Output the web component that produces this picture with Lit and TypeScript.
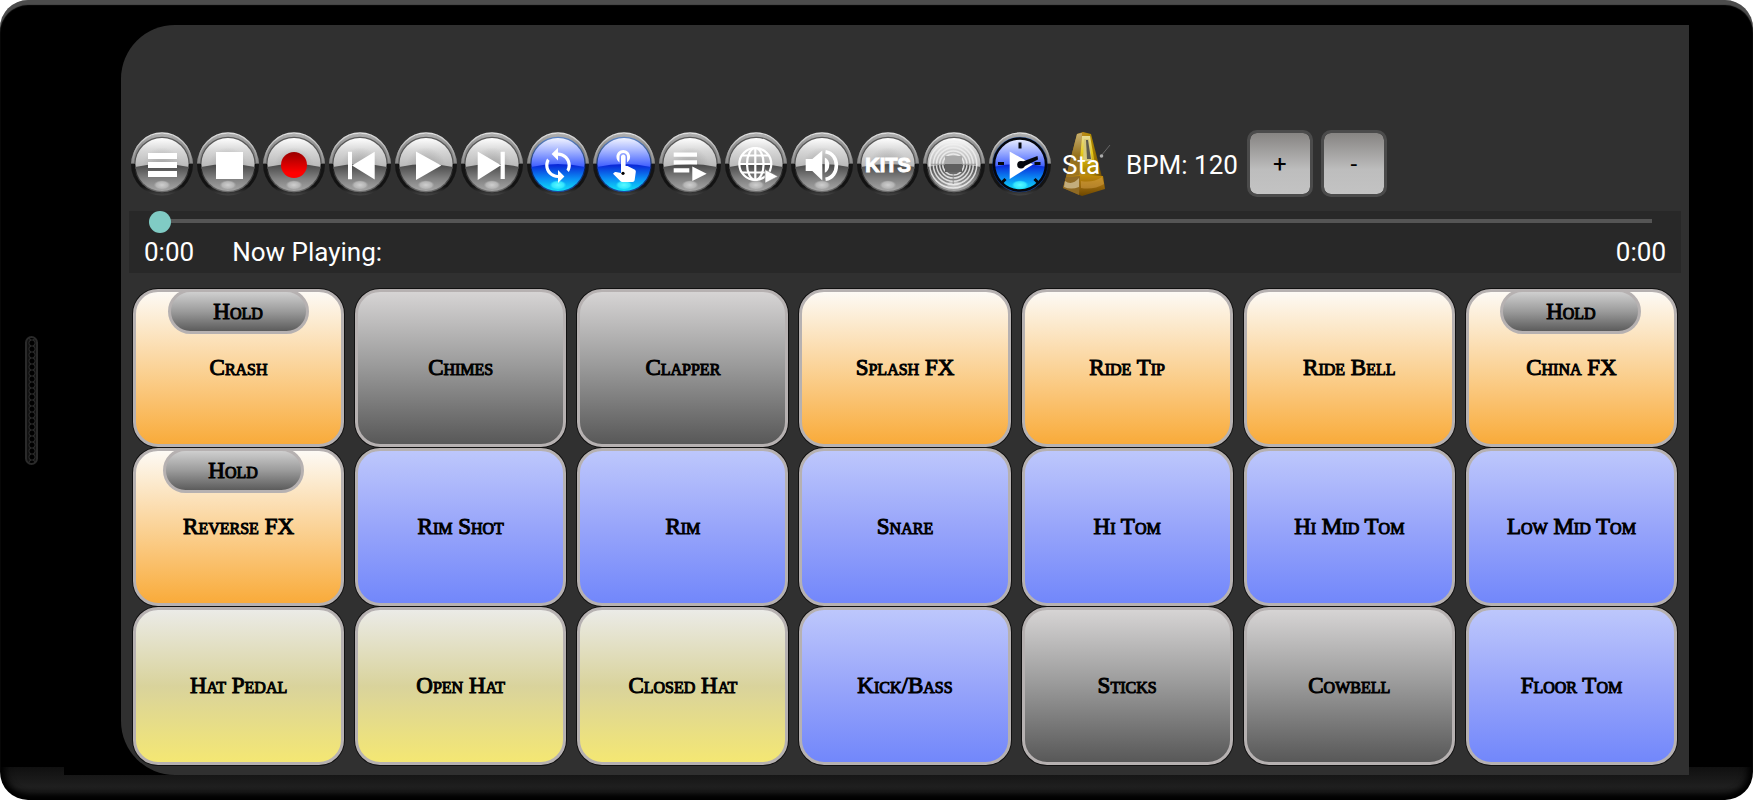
import { LitElement, html, svg, css, nothing } from "lit";
import { customElement, property, state } from "lit/decorators.js";
import { classMap } from "lit/directives/class-map.js";

const GLYPHS: Record<string, unknown> = {
  menu: svg`<path d="M17 20h29v6H17zM17 29h29v6H17zM17 38h29v6H17z"/>`,
  stop: svg`<path d="M19 19h27v27H19z"/>`,
  record: svg`<circle cx="31" cy="32" r="13" fill="url(#rec)"/>`,
  previous: svg`<path d="M19 18.7h4v27.6h-4zM45.7 18.7v27.8L23 32.5z"/>`,
  play: svg`<path d="M21 18.5L46.3 32.5 21 47z"/>`,
  next: svg`<path d="M16.7 18.5L40 32.3 16.7 47zM39.6 18.7h4.2v27.3h-4.2z"/>`,
  loop: svg`<path transform="translate(11.8 13.1) scale(1.6)" d="M12 4V1L8 5l4 4V6c3.31 0 6 2.69 6 6 0 1.01-.25 1.97-.7 2.8l1.46 1.46C19.54 15.03 20 13.57 20 12c0-4.42-3.58-8-8-8zm0 14c-3.31 0-6-2.69-6-6 0-1.01.25-1.97.7-2.8L5.24 7.74C4.46 8.97 4 10.43 4 12c0 4.42 3.58 8 8 8v3l4-4-4-4v3z"/>`,
  touch: svg`<path transform="translate(12.8 12.4) scale(1.52)" d="M9 11.24V7.5C9 6.12 10.12 5 11.5 5S14 6.12 14 7.5v3.74c1.21-.81 2-2.18 2-3.74C16 5.01 13.99 3 11.5 3S7 5.01 7 7.5c0 1.56.79 2.93 2 3.74zm9.84 4.63l-4.54-2.26c-.17-.07-.35-.11-.54-.11H13v-6c0-.83-.67-1.5-1.5-1.5S10 6.67 10 7.5v10.74l-3.43-.72c-.08-.01-.15-.03-.24-.03-.31 0-.59.13-.79.33l-.79.8 4.94 4.94c.27.27.65.44 1.06.44h6.79c.75 0 1.33-.55 1.44-1.28l.75-5.27c.01-.07.02-.14.02-.2 0-.62-.38-1.16-.91-1.38z"/><circle cx="30" cy="40.3" r="1.6" fill="#000"/>`,
  playlist: svg`<path d="M14.7 19.5H38v4.2H14.7zM14.7 27.2H38v4.2H14.7zM14.7 35.2h15.6v4.2H14.7zM33.3 33.5l14.4 7.2-14.4 7.2z"/>`,
  globe: svg`<g fill="none" stroke="#fff" stroke-width="2.2">
      <circle cx="30.3" cy="31" r="16"/><ellipse cx="30.3" cy="31" rx="8.3" ry="16"/>
      <path d="M30.3 15v32M14.3 31h32M17 22.5h26.6M17 39.5h26.6"/></g>
      <path d="M40 36.6l13 6.8-13 6.8z" stroke="#777" stroke-width=".6"/>`,
  volume: svg`<path d="M14.7 26h6.6l10-8.6v30l-10-9.5h-6.6z"/><path d="M33.8 24.5c6 2.6 6 12.6 0 15.2z"/>
      <path d="M34.5 18.7c14.5 2 14.5 25.5 0 27.5" fill="none" stroke="#fff" stroke-width="3.6"/>`,
  kits: svg`<text class="kits" x="31" y="38.5" text-anchor="middle">KITS</text>`,
  rings: svg`<g fill="none" stroke="#f0f0f0" stroke-width="1.5" opacity=".85">
      <circle cx="30.3" cy="31.5" r="23.5"/><circle cx="30.3" cy="31.5" r="20"/><circle cx="30.3" cy="31.5" r="16.8"/>
      <circle cx="30.3" cy="31.5" r="13.6"/><circle cx="30.3" cy="31.5" r="10.6"/></g>
      <path d="M22 23h17v8H22z" fill="#a9a9a9"/><path d="M22 31h17v8H22z" fill="#606060"/>
      <path d="M30.3 41v10M8 31.5h14M39 31.5h14" stroke="#888" stroke-width="1.5" opacity=".6"/>`,
  timer: svg`<circle cx="31" cy="31.5" r="26" fill="none" stroke="#05070d" stroke-width="2.5"/>
      <path d="M31 9.5v6M9 30.5h6M45.5 30.5h6M12.5 50l4-4M49.5 50l-4-4" stroke="#05070d" stroke-width="3" fill="none"/>
      <path d="M20.7 18.5L44 31.5 20.7 46z"/>
      <path d="M31 29.5L48.5 23 49 26.5 34 34z" fill="#05070d"/><circle cx="32" cy="31.8" r="3.8" fill="#05070d"/>`,
};

@customElement("orb-button")
export class OrbButton extends LitElement {
  @property() glyph = "menu";
  @property() label = "";
  @property({ type: Boolean }) active = false;

  static styles = css`
    :host { display: block; }
    .orb {
      display: block;
      width: 62px;
      height: 64px;
      padding: 0;
      border: 0;
      background: none;
      cursor: pointer;
    }
    .art { display: block; width: 62px; height: 64px; }
    .kits {
      font: bold 20px "Liberation Sans", Arial, sans-serif;
      stroke: #fff;
      stroke-width: 1px;
    }
  `;

  render() {
    const on = this.active;
    return html`<button class="orb" aria-label=${this.label} aria-pressed=${on ? "true" : "false"}>
      <svg class="art" viewBox="0 -1 62 64" aria-hidden="true">
        <defs>
          <linearGradient id="rim" x1="0" y1="0" x2="0" y2="1">
            <stop offset="0" stop-color="#b0b0b0"/><stop offset=".25" stop-color="#888"/>
            <stop offset=".48" stop-color="#8c8c8c"/><stop offset=".49" stop-color="#161616"/>
            <stop offset=".85" stop-color="#121212"/><stop offset="1" stop-color="#444"/>
          </linearGradient>
          <linearGradient id="edge" x1="0" y1="0" x2="0" y2="1">
            <stop offset="0" stop-color="#e0e0e0"/><stop offset="1" stop-color="#8e8e8e"/>
          </linearGradient>
          <linearGradient id="lip" x1="0" y1="0" x2="0" y2="1">
            <stop offset="0" stop-color=${on ? "#5d86c8" : "#5a5a5a"}/><stop offset=".49" stop-color=${on ? "#1b3566" : "#505050"}/>
            <stop offset=".5" stop-color=${on ? "#041440" : "#0a0a0a"}/><stop offset="1" stop-color=${on ? "#1c4aa0" : "#707070"}/>
          </linearGradient>
          <linearGradient id="upper" x1="0" y1="0" x2="0" y2="1">
            <stop offset=".15" stop-color=${on ? "#eef1ff" : "#fdfdfd"}/>
            <stop offset=".5" stop-color=${on ? "#a3b3ff" : "#d6d6d6"}/>
            <stop offset=".95" stop-color=${on ? "#3c5cff" : "#b8b8b8"}/>
          </linearGradient>
          <radialGradient id="shade" cx=".5" cy=".55" r=".38">
            <stop offset="0" stop-color="#888" stop-opacity=${on ? "0" : ".55"}/>
            <stop offset="1" stop-color="#888" stop-opacity="0"/>
          </radialGradient>
          <linearGradient id="lower" x1="0" y1="0" x2="0" y2="1">
            <stop offset=".05" stop-color=${on ? "#0a2ad8" : "#4c4c4c"}/>
            <stop offset=".5" stop-color=${on ? "#0a8cf4" : "#808080"}/>
            <stop offset=".95" stop-color=${on ? "#10e4f6" : "#a8a8a8"}/>
          </linearGradient>
          <radialGradient id="glow">
            <stop offset="0" stop-color=${on ? "#5cfaff" : "#d0d0d0"}/>
            <stop offset=".7" stop-color=${on ? "#3cf0ff" : "#bdbdbd"} stop-opacity=".8"/>
            <stop offset="1" stop-color=${on ? "#20d8ff" : "#aaa"} stop-opacity="0"/>
          </radialGradient>
          <linearGradient id="rec" x1="0" y1="0" x2="0" y2="1">
            <stop offset="0" stop-color="#900"/><stop offset=".8" stop-color="#f00"/>
          </linearGradient>
          <clipPath id="disc"><circle cx="31" cy="31.5" r="26.6"/></clipPath>
        </defs>
        <circle cx="31" cy="31.5" r="31" fill="url(#rim)"/>
        <path d="M2 29A29 29 0 0 1 60 29" fill="none" stroke="url(#edge)" stroke-width="1.3"/>
        <circle cx="31" cy="31.5" r="27.8" fill="url(#lip)"/>
        <g clip-path="url(#disc)">
          <path d="M0 0h62v36H0z" fill="url(#upper)"/>
          <circle cx="31" cy="31.5" r="26" fill="url(#shade)"/>
          <path d="M4 34Q31 28 58 34V60H4z" fill="url(#lower)"/>
        </g>
        <ellipse cx="31" cy="52" rx="8.5" ry="4.8" fill="url(#glow)"/>
        <g fill="#fff">${GLYPHS[this.glyph]}</g>
      </svg>
    </button>`;
  }
}

type Tone = "amber" | "grey" | "blue" | "yellow";

@customElement("drum-pad")
export class DrumPad extends LitElement {
  @property() name = "";
  @property() tone: Tone = "grey";
  @property() hold: "" | "center" | "left" = "";

  static styles = css`
    :host { display: grid; position: relative; min-width: 0; }
    .pad, .hold {
      box-sizing: border-box;
      margin: 0;
      padding: 0;
      border: 3px solid #b6b1b1;
      color: #000;
      font: small-caps 23px/26px "Liberation Serif", "Times New Roman", serif;
      -webkit-text-stroke: 1px #000;
      cursor: pointer;
      background-origin: padding-box;
    }
    .pad {
      width: 100%;
      min-height: 100px;
      border-radius: 25px;
      box-shadow: 0 0 0 1px #111;
    }
    .amber { background-image: linear-gradient(#fdfaf5, #fbd9a6 42%, #f9ab3a); }
    .grey { background-image: linear-gradient(#d6d4d4, #9b9b9b 48%, #585858); }
    .blue { background-image: linear-gradient(#bdc7fc, #98a5fa 50%, #7287fb); }
    .yellow { background-image: linear-gradient(#ebebe7, #d9d39c 50%, #f4e773); }
    .hold {
      position: absolute;
      top: 0;
      left: calc(50% - 71px);
      width: 141px;
      height: 45px;
      border-radius: 23px;
      background-image: linear-gradient(#cfcfcf, #9b9b9b 50%, #5c5c5c);
    }
    .left { left: calc(50% - 76px); }
  `;

  render() {
    return html`
      <button class=${classMap({ pad: true, [this.tone]: true })}>${this.name}</button>
      ${this.hold
        ? html`<button class=${classMap({ hold: true, left: this.hold === "left" })}>Hold</button>`
        : nothing}
    `;
  }
}

const CONTROLS: Array<{ glyph: string; label: string; active?: boolean }> = [
  { glyph: "menu", label: "Menu" },
  { glyph: "stop", label: "Stop" },
  { glyph: "record", label: "Record" },
  { glyph: "previous", label: "Previous" },
  { glyph: "play", label: "Play" },
  { glyph: "next", label: "Next" },
  { glyph: "loop", label: "Loop", active: true },
  { glyph: "touch", label: "Touch", active: true },
  { glyph: "playlist", label: "Playlist" },
  { glyph: "globe", label: "Online songs" },
  { glyph: "volume", label: "Volume" },
  { glyph: "kits", label: "Kits" },
  { glyph: "rings", label: "Cymbals" },
  { glyph: "timer", label: "Timer", active: true },
];

const PADS: Array<{ name: string; tone: Tone; hold?: "center" | "left" }> = [
  { name: "Crash", tone: "amber", hold: "center" },
  { name: "Chimes", tone: "grey" },
  { name: "Clapper", tone: "grey" },
  { name: "Splash FX", tone: "amber" },
  { name: "Ride Tip", tone: "amber" },
  { name: "Ride Bell", tone: "amber" },
  { name: "China FX", tone: "amber", hold: "center" },
  { name: "Reverse FX", tone: "amber", hold: "left" },
  { name: "Rim Shot", tone: "blue" },
  { name: "Rim", tone: "blue" },
  { name: "Snare", tone: "blue" },
  { name: "Hi Tom", tone: "blue" },
  { name: "Hi Mid Tom", tone: "blue" },
  { name: "Low Mid Tom", tone: "blue" },
  { name: "Hat Pedal", tone: "yellow" },
  { name: "Open Hat", tone: "yellow" },
  { name: "Closed Hat", tone: "yellow" },
  { name: "Kick/Bass", tone: "blue" },
  { name: "Sticks", tone: "grey" },
  { name: "Cowbell", tone: "grey" },
  { name: "Floor Tom", tone: "blue" },
];

@customElement("app-root")
export class AppRoot extends LitElement {
  @state() private bpm = 120;

  static styles = css`
    :host {
      display: block;
      background: #fff;
      color: #fff;
      font: 26px/40px Roboto, sans-serif;
    }
    .device {
      box-sizing: border-box;
      display: flex;
      min-height: 100vh;
      padding: 25px 64px 25px 0;
      border-radius: 28px;
      background: linear-gradient(#101010, #1f1f1f 60%, #161616) bottom / 100% 33px no-repeat #000;
      box-shadow: inset 0 5px 1px #4c4c4c, inset 0 -5px 6px #000, inset 4px 0 8px #000, inset -4px 0 8px #000;
    }
    .rail {
      flex: none;
      width: 64px;
      display: flex;
      align-items: center;
    }
    .speaker {
      box-sizing: border-box;
      width: 13px;
      height: 129px;
      margin-left: 25px;
      border: 2px solid #2a2a2a;
      border-radius: 7px;
      background: radial-gradient(circle at 5px 3px, #000 2px, #2c2c2c 3px, #111 4px) 0 2px / 100% 6px;
    }
    .glass {
      flex: 1;
      min-width: 0;
      display: flex;
      padding-left: 57px;
      background: #000;
    }
    .screen {
      flex: 1;
      min-width: 0;
      box-sizing: border-box;
      display: flex;
      flex-direction: column;
      padding: 105px 8px 10px;
      border-radius: 54px 0 0 54px;
      background: #303030;
    }
    .toolbar {
      display: flex;
      align-items: center;
      gap: 4px;
      padding-left: 2px;
      margin-bottom: 14px;
      min-height: 67px;
    }
    .metronome {
      display: grid;
      align-items: center;
      width: 50px;
      height: 66px;
      margin-left: 7px;
      padding: 0;
      border: 0;
      background: none;
      color: #fff;
      font: inherit;
      text-align: left;
      cursor: pointer;
    }
    .cone, .caption { grid-area: 1 / 1; }
    .cone { display: block; width: 50px; height: 66px; }
    .bpm { margin: 0 5px 0 10px; padding-top: 2px; white-space: nowrap; }
    .caption { padding-top: 2px; }
    .step {
      box-sizing: border-box;
      width: 66px;
      height: 67px;
      padding: 0;
      border: 3px solid #4b4b4b;
      border-radius: 10px;
      background: linear-gradient(#868482, #bdbdbd 60%, #c3c3c3) padding-box;
      color: #000;
      font: 24px/28px Roboto, sans-serif;
      cursor: pointer;
    }
    .steps { display: flex; gap: 8px; }
    .player { background: #282828; }
    .seek {
      display: block;
      box-sizing: border-box;
      width: calc(100% - 38px);
      height: 22px;
      margin: 0 18px 0 20px;
      appearance: none;
      -webkit-appearance: none;
      background: linear-gradient(#555, #555) center 8px / calc(100% - 22px) 4px no-repeat;
    }
    .seek::-webkit-slider-thumb {
      -webkit-appearance: none;
      width: 22px;
      height: 22px;
      border-radius: 50%;
      background: #80cbc4;
    }
    .info {
      display: flex;
      gap: 38px;
      padding: 0 15px 2px;
      line-height: 38px;
    }
    .title { flex: 1; }
    .pads {
      flex: 1;
      display: grid;
      grid-template-columns: repeat(7, minmax(0, 1fr));
      grid-auto-rows: 1fr;
      gap: 1px 11px;
      margin-top: 16px;
      padding: 0 4px;
    }
  `;

  private step(delta: number) {
    this.bpm = Math.max(1, this.bpm + delta);
  }

  render() {
    return html`
      <div class="device">
        <div class="rail"><div class="speaker"></div></div>
        <div class="glass">
          <main class="screen">
            <div class="toolbar">
              ${CONTROLS.map(
                (c) => html`<orb-button .glyph=${c.glyph} .label=${c.label} .active=${!!c.active}></orb-button>`
              )}
              <button class="metronome">
                <svg class="cone" viewBox="0 0 50 66" aria-hidden="true">
                  <defs>
                    <linearGradient id="body" x1="0" y1="0" x2="1" y2="0">
                      <stop offset="0" stop-color="#8a6412"/><stop offset=".45" stop-color="#b98a1c"/>
                      <stop offset=".7" stop-color="#b08a00"/><stop offset="1" stop-color="#6e4a04"/>
                    </linearGradient>
                    <linearGradient id="front" x1="0" y1="0" x2="0" y2="1">
                      <stop offset="0" stop-color="#e6dc9a"/><stop offset=".45" stop-color="#e8cc1c"/>
                      <stop offset="1" stop-color="#a98000"/>
                    </linearGradient>
                    <linearGradient id="base" x1="0" y1="0" x2="0" y2="1">
                      <stop offset="0" stop-color="#c08a08"/><stop offset=".5" stop-color="#9c6a0c"/>
                      <stop offset="1" stop-color="#6b4600"/>
                    </linearGradient>
                    <linearGradient id="side" x1="0" y1="0" x2="0" y2="1">
                      <stop offset="0" stop-color="#c8b070"/><stop offset=".5" stop-color="#94701c"/>
                      <stop offset="1" stop-color="#9c7420"/>
                    </linearGradient>
                  </defs>
                  <path d="M15 3l6-2 8 2 11 43-20 4L4 46z" fill="url(#body)"/>
                  <path d="M15 3l5-1-3 46L4 46z" fill="url(#side)"/>
                  <path d="M20 5h8l6 34-17 2z" fill="url(#front)"/>
                  <path d="M22 8h5l3 22h-9z" fill="#d6c878"/>
                  <path d="M24 9h2l3 19h-4z" fill="#5c5a4c"/>
                  <path d="M4 46l14-2 23 1 2 13-23 7L1 57z" fill="url(#base)"/>
                  <path d="M4 46l14-1-1 19L1 57z" fill="#8f6a24"/>
                  <path d="M3 50q7 5 14-3v9q-8 3-15 0z" fill="#d4c49a" opacity=".75"/>
                  <path d="M19 50q12 2 21-4l2 7q-10 6-23 4z" fill="#d6a24a" opacity=".5"/>
                  <path d="M39 25l9-11" stroke="#666" stroke-width="1"/>
                  <circle cx="39.5" cy="25" r="1.8" fill="#aaa"/>
                </svg>
                <span class="caption">Sta</span>
              </button>
              <span class="bpm">BPM: ${this.bpm}</span>
              <div class="steps">
                <button class="step" @click=${() => this.step(1)}>+</button>
                <button class="step" @click=${() => this.step(-1)}>-</button>
              </div>
            </div>
            <section class="player">
              <input class="seek" type="range" min="0" max="100" .value=${"0"} aria-label="Position" />
              <div class="info">
                <span>0:00</span><span class="title">Now Playing:</span><span>0:00</span>
              </div>
            </section>
            <section class="pads">
              ${PADS.map(
                (p) => html`<drum-pad .name=${p.name} .tone=${p.tone} .hold=${p.hold ?? ""}></drum-pad>`
              )}
            </section>
          </main>
        </div>
      </div>
    `;
  }
}
